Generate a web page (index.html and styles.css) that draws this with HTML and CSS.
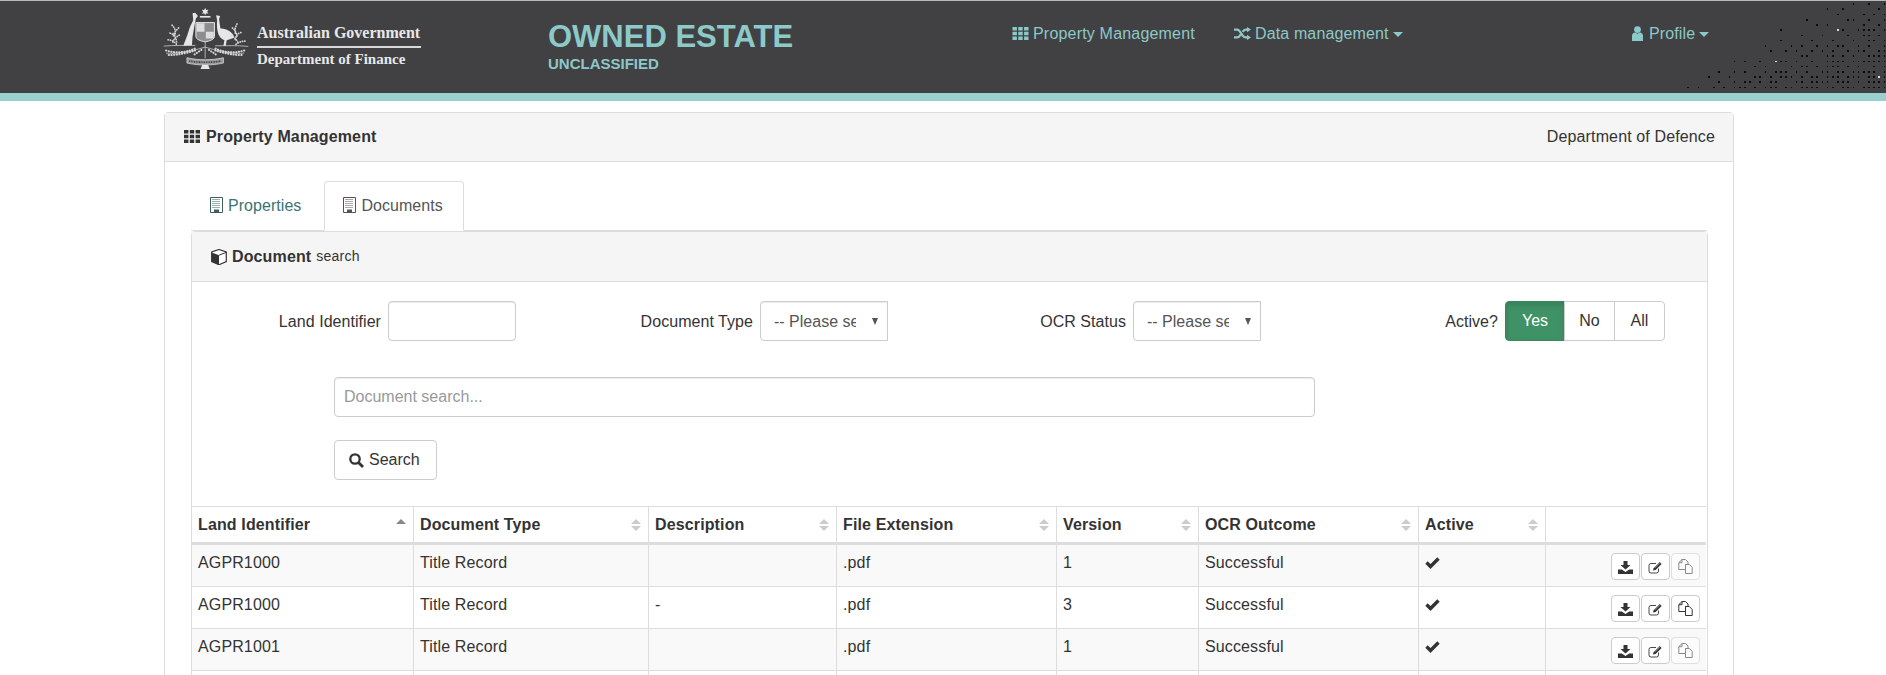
FILE: index.html
```
<!DOCTYPE html>
<html lang="en">
<head>
<meta charset="utf-8">
<title>Owned Estate</title>
<link rel="stylesheet" href="styles.css">
</head>
<body>
<svg class="defs" width="0" height="0" aria-hidden="true">
  <symbol id="i-grid" viewBox="0 0 16 13">
    <path d="M0 0h4.400v3.600H0zM5.800 0h4.400v3.600H5.800zM11.600 0H16v3.600h-4.400zM0 4.700h4.400v3.600H0zM5.800 4.700h4.400v3.600H5.800zM11.600 4.700H16v3.600h-4.400zM0 9.400h4.400V13H0zM5.800 9.400h4.400V13H5.800zM11.600 9.400H16V13h-4.400z"/>
  </symbol>
  <symbol id="i-building" viewBox="0 0 13 16">
    <path d="M.5.5h12v15H.5z" fill="#fff" stroke="currentColor"/>
    <path d="M2.500 2.500h8M2.500 4.500h8M2.500 6.500h8M2.500 8.500h8M2.500 10.500h8" stroke="currentColor" stroke-dasharray="1 1" fill="none"/>
    <path d="M4 12.500h5V16H4z" fill="currentColor"/>
  </symbol>
  <symbol id="i-cube" viewBox="0 0 16 16">
    <path d="M8 .5 15.300 3v9.600L8 15.700.7 12.600V3z" fill="#fff" stroke="currentColor" stroke-width="1.200"/>
    <path d="M.7 3.400 8 6.200v9.500L.7 12.600z"/>
    <path d="M8 6.200 15.300 3.400" stroke="currentColor" fill="none"/>
  </symbol>
  <symbol id="i-random" viewBox="0 0 17 13">
    <path d="M0 2.600h3.200c3.400 0 4.600 7.800 8.400 7.800h1.600M0 10.400h3.200c1.500 0 2.600-1.400 3.400-2.800M8.600 4.800c.8-1.200 1.700-2.200 3-2.200h1.600" fill="none" stroke="currentColor" stroke-width="2.200"/>
    <path d="M13 0l4 2.600-4 2.600zM13 7.800l4 2.600-4 2.600z"/>
  </symbol>
  <symbol id="i-user" viewBox="0 0 11 15">
    <circle cx="5.500" cy="3.600" r="3.400"/>
    <path d="M0 15V10c0-2 1.400-3.200 3-3.400l2.500 1.200L8 6.600c1.600.2 3 1.400 3 3.400v5z"/>
  </symbol>
  <symbol id="i-search" viewBox="0 0 15 15">
    <circle cx="6" cy="6" r="4.700" fill="none" stroke="currentColor" stroke-width="2.300"/>
    <path d="M9.500 9.500 14 14" stroke="currentColor" stroke-width="2.800" fill="none"/>
  </symbol>
  <symbol id="i-ok" viewBox="0 0 15 12">
    <path d="M1.500 5.500 5.500 9.500 13.500 1.500" fill="none" stroke="currentColor" stroke-width="3.400"/>
  </symbol>
  <symbol id="i-download" viewBox="0 0 15 13">
    <path d="M5.500 0h4v4h3L7.500 8.500 2.500 4h3z"/>
    <path d="M0 8.500h3.800L7.500 11l3.700-2.500H15V13H0z"/>
  </symbol>
  <symbol id="i-edit" viewBox="0 0 15 13">
    <path d="M10.500 7.500V10a2 2 0 0 1-2 2H3a2 2 0 0 1-2-2V4.500a2 2 0 0 1 2-2h5" fill="none" stroke="currentColor" stroke-width=".9"/>
    <path d="M5 9.500 5.600 7l6-6 2 2-6 6z"/>
    <path d="M6.700 6.900 11.700 1.900" stroke="#fff" stroke-width=".6" fill="none"/>
  </symbol>
  <symbol id="i-copy" viewBox="0 0 15 15">
    <path d="M4 .5h3.500L10 3v2.500H7.500v5H.8V3.700z" fill="none" stroke="currentColor"/>
    <path d="M4 .5v3.200H.8M7.500 5.500h3.800L14.200 8.400V14.500H7.500z" fill="none" stroke="currentColor"/>
  </symbol>
</svg>

<header class="topbar">
  <div class="brand">
    <svg class="crest" viewBox="20 5 265 190" aria-hidden="true">
      <g fill="#e6e6e6">
        <path d="M150 7l3 7 7-1-4 6 4 6-7-1-3 6-3-6-7 1 4-6-4-6 7 1z"/>
        <path d="M112 24l8-2 8 10-6 8-4 20-6 35-2 25-26 2 12-32 8-25 10-20z"/>
        <path d="M183 30l12 2-3 10 4 28c14-2 39 10 42 28l-23 7-3 17h-7l3-17c-16-5-25-25-22-60z"/>
        <path d="M134 32h32v5h-32z"/>
        <path d="M142 178h16l6 14h-28z"/>
      </g>
      <path d="M122 52h56v42c0 8-14 14-28 16-14-2-28-8-28-16z" fill="#8d8d8e" stroke="#e6e6e6" stroke-width="3"/>
      <path d="M124 54h24v26h-24zM152 80h24v20h-24z" fill="#dcdcdc"/>
      <path d="M150 110v50M150 126c-30 8-70 22-118 18M150 126c30 8 70 22 118 18M25 123c30-3 65-2 95-2M180 122c30 0 65-2 100 2" fill="none" stroke="#e6e6e6" stroke-width="2"/>
      <g fill="none" stroke="#d6d6d6" stroke-linecap="round">
        <path d="M50 60c10 8 12 20 8 32M70 68c-8 8-14 14-16 24M44 84c10 2 18 10 20 26M72 90c-8 4-16 10-20 22M38 104c10 0 20 6 26 14" stroke-width="5" stroke-dasharray="1 6"/>
        <path d="M246 56c-6 10-8 20-4 32M232 68c8 6 12 14 14 26M258 82c-10 2-16 10-18 24M228 92c8 2 16 10 22 22M270 108c-10 0-20 4-28 10" stroke-width="5" stroke-dasharray="1 6"/>
        <path d="M32 136c30 10 60 6 88-6M40 150c28 0 56-6 80-14M268 136c-30 10-60 6-88-6M260 150c-28 0-56-6-80-14M118 148l24-16M182 148l-24-16" stroke-width="6" stroke-dasharray="1 7"/>
      </g>
      <path d="M95 158c35 8 75 8 110 0v16c-35 8-75 8-110 0z" fill="#9a9a9b" stroke="#e6e6e6" stroke-width="2"/>
      <path d="M102 168c30 5 66 5 96 0" fill="none" stroke="#414042" stroke-width="5" stroke-dasharray="3 2"/>
    </svg>
    <div class="brand-text">
      <div class="gov">Australian Government</div>
      <div class="dept">Department of Finance</div>
    </div>
  </div>
  <div class="app-title">
    <div class="app-name">OWNED ESTATE</div>
    <div class="app-class">UNCLASSIFIED</div>
  </div>
  <nav class="topnav">
    <a class="topnav-item nav-prop"><svg class="ic ic-grid"><use href="#i-grid"/></svg>Property Management</a>
    <a class="topnav-item nav-data"><svg class="ic ic-random"><use href="#i-random"/></svg>Data management<span class="caret"></span></a>
    <a class="topnav-item nav-profile"><svg class="ic ic-user"><use href="#i-user"/></svg>Profile<span class="caret"></span></a>
  </nav>
  <svg class="dots" viewBox="0 0 618 279" aria-hidden="true">
    <path d="M24 259h0M55 259h0M101 259h0M132 259h0M163 259h0M179 259h0M194 259h0M225 259h0M256 259h0M272 259h0M287 259h0M318 259h0M334 259h0M365 259h0M380 259h0M396 259h0M411 259h0M442 259h0M458 259h0M489 259h0M504 259h0M520 259h0M551 259h0M566 259h0M582 259h0M597 259h0M613 259h0
    M117 243h0M163 243h0M194 243h0M209 243h0M240 243h0M272 243h0M287 243h0M349 243h0M365 243h0M396 243h0M411 243h0M427 243h0M442 243h0M473 243h0M489 243h0M504 243h0M535 243h0M566 243h0M582 243h0M597 243h0M613 243h0
    M86 228h0M148 228h0M225 228h0M240 228h0M272 228h0M303 228h0M318 228h0M334 228h0M365 228h0M396 228h0M411 228h0M442 228h0M458 228h0M473 228h0M504 228h0M520 228h0M535 228h0M566 228h0M582 228h0M613 228h0
    M117 212h0M163 212h0M194 212h0M256 212h0M287 212h0M303 212h0M318 212h0M349 212h0M380 212h0M427 212h0M442 212h0M473 212h0M489 212h0M520 212h0M535 212h0M551 212h0M566 212h0M582 212h0M613 212h0
    M225 196h0M256 196h0M334 196h0M365 196h0M380 196h0M411 196h0M442 196h0M458 196h0M473 196h0M504 196h0M535 196h0M582 196h0M613 196h0
    M163 181h0M194 181h0M240 181h0M303 181h0M318 181h0M349 181h0M396 181h0M442 181h0M458 181h0M473 181h0M489 181h0M520 181h0M535 181h0M551 181h0M566 181h0M582 181h0M597 181h0M613 181h0
    M365 165h0M380 165h0M442 165h0M458 165h0M489 165h0M520 165h0M566 165h0M582 165h0M597 165h0M613 165h0
    M272 150h0M318 150h0M349 150h0M396 150h0M427 150h0M458 150h0M504 150h0M535 150h0M551 150h0M597 150h0M613 150h0
    M256 134h0M334 134h0M365 134h0M411 134h0M442 134h0M473 134h0M489 134h0M535 134h0M566 134h0M613 134h0
    M303 118h0M396 118h0M458 118h0M520 118h0M566 118h0M582 118h0M613 118h0
    M365 103h0M427 103h0M504 103h0M551 103h0M566 103h0M597 103h0
    M303 87h0M489 87h0M535 87h0M551 87h0M566 87h0M582 87h0M613 87h0
    M411 72h0M442 72h0M551 72h0M597 72h0
    M380 56h0M504 56h0M520 56h0M566 56h0M613 56h0
    M473 40h0M551 40h0M582 40h0M613 40h0
    M442 24h0M489 24h0M597 24h0
    M520 9h0M566 9h0M613 9h0" class="dots-dark"/>
    <path d="M287 181h0M473 87h0M597 228h0" class="dots-light"/>
  </svg>
</header>

<main class="panel">
  <div class="panel-head">
    <div class="panel-title"><svg class="ic ic-grid"><use href="#i-grid"/></svg>Property Management</div>
    <div>Department of Defence</div>
  </div>
  <div class="panel-body">
    <ul class="tabs">
      <li class="tab"><a><svg class="ic ic-building"><use href="#i-building"/></svg>Properties</a></li>
      <li class="tab tab-active"><a><svg class="ic ic-building"><use href="#i-building"/></svg>Documents</a></li>
    </ul>
    <section class="inner">
      <div class="inner-head"><svg class="ic ic-cube"><use href="#i-cube"/></svg><strong>Document</strong> <small>search</small></div>
      <form class="search-form">
        <div class="filters">
          <label class="field field-land">Land Identifier <input class="control control-land" type="text"></label>
          <label class="field field-type">Document Type <span class="select-wrap"><select class="control"><option>-- Please select --</option></select></span></label>
          <label class="field field-ocr">OCR Status <span class="select-wrap"><select class="control"><option>-- Please select --</option></select></span></label>
          <div class="field field-active">Active?
            <div class="btn-group">
              <button type="button" class="seg seg-on">Yes</button><button type="button" class="seg">No</button><button type="button" class="seg">All</button>
            </div>
          </div>
        </div>
        <input class="control control-search" type="text" placeholder="Document search...">
        <button type="button" class="btn-search"><svg class="ic ic-search"><use href="#i-search"/></svg>Search</button>
      </form>
      <table class="grid">
        <colgroup>
          <col class="c1"><col class="c2"><col class="c3"><col class="c4"><col class="c5"><col class="c6"><col class="c7"><col class="c8">
        </colgroup>
        <thead>
          <tr>
            <th class="sort sort-asc">Land Identifier</th>
            <th class="sort">Document Type</th>
            <th class="sort">Description</th>
            <th class="sort">File Extension</th>
            <th class="sort">Version</th>
            <th class="sort">OCR Outcome</th>
            <th class="sort">Active</th>
            <th></th>
          </tr>
        </thead>
        <tbody>
          <tr>
            <td>AGPR1000</td><td>Title Record</td><td></td><td>.pdf</td><td>1</td><td>Successful</td>
            <td><svg class="ic ic-ok"><use href="#i-ok"/></svg></td>
            <td class="actions"><button type="button" class="act"><svg class="ic ic-act"><use href="#i-download"/></svg></button><button type="button" class="act"><svg class="ic ic-act"><use href="#i-edit"/></svg></button><button type="button" class="act act-off"><svg class="ic ic-copy"><use href="#i-copy"/></svg></button></td>
          </tr>
          <tr>
            <td>AGPR1000</td><td>Title Record</td><td>-</td><td>.pdf</td><td>3</td><td>Successful</td>
            <td><svg class="ic ic-ok"><use href="#i-ok"/></svg></td>
            <td class="actions"><button type="button" class="act"><svg class="ic ic-act"><use href="#i-download"/></svg></button><button type="button" class="act"><svg class="ic ic-act"><use href="#i-edit"/></svg></button><button type="button" class="act"><svg class="ic ic-copy"><use href="#i-copy"/></svg></button></td>
          </tr>
          <tr>
            <td>AGPR1001</td><td>Title Record</td><td></td><td>.pdf</td><td>1</td><td>Successful</td>
            <td><svg class="ic ic-ok"><use href="#i-ok"/></svg></td>
            <td class="actions"><button type="button" class="act"><svg class="ic ic-act"><use href="#i-download"/></svg></button><button type="button" class="act"><svg class="ic ic-act"><use href="#i-edit"/></svg></button><button type="button" class="act act-off"><svg class="ic ic-copy"><use href="#i-copy"/></svg></button></td>
          </tr>
          <tr>
            <td></td><td></td><td></td><td></td><td></td><td></td><td></td><td></td>
          </tr>
        </tbody>
      </table>
    </section>
  </div>
</main>
</body>
</html>
```
FILE: styles.css
```
* { box-sizing: border-box; }
html, body { margin: 0; height: 675px; overflow: hidden; }
body {
  background: #fff;
  color: #333;
  font: 16px/23px "Liberation Sans", Arial, sans-serif;
  letter-spacing: .13px;
}
.defs { position: absolute; }
.ic { display: inline-block; fill: currentColor; flex: none; }

/* Top bar */
.topbar {
  position: relative;
  display: flex;
  height: 101px;
  padding-left: 162px;
  background: #414042;
  border-top: 1px solid #b8b8b8;
  border-bottom: 8px solid #9bd0d0;
  color: #8cc9c9;
}
.brand { display: flex; width: 386px; padding-top: 6px; }
.crest { width: 88px; height: 63px; }
.brand-text { margin-left: 7px; padding-top: 15px; width: 164px; color: #e8e8e8; font-family: "Liberation Serif", "Times New Roman", serif; font-weight: 700; letter-spacing: 0; }
.gov { font-size: 16px; line-height: 22px; padding-bottom: 2px; border-bottom: 2px solid #d8d8d8; white-space: nowrap; }
.dept { font-size: 15px; line-height: 18px; margin-top: 2px; white-space: nowrap; }
.app-title { width: 464px; padding-top: 18px; font-weight: 700; letter-spacing: 0; }
.app-name { font-size: 31px; line-height: 36px; }
.app-class { font-size: 15px; line-height: 16px; margin-top: 1px; }
.topnav { display: flex; flex: 1; padding-top: 21px; line-height: 23px; }
.topnav-item { display: flex; align-items: center; height: 23px; white-space: nowrap; }
.nav-prop { width: 222px; letter-spacing: .19px; }
.nav-data { width: 398px; }
.topnav .ic-grid { width: 17px; height: 13px; margin-right: 4px; }
.ic-random { width: 17px; height: 13px; margin-right: 4px; }
.ic-user { width: 11px; height: 15px; margin-right: 6px; }
.caret {
  width: 0; height: 0; margin-left: 4px; margin-top: 2px;
  border-left: 5px solid transparent;
  border-right: 5px solid transparent;
  border-top: 5px solid currentColor;
}
.dots { position: absolute; right: 0; top: 0; width: 206px; height: 93px; fill: none; stroke-linecap: square; stroke-width: 5; shape-rendering: crispEdges; }
.dots-dark { stroke: #0c0c0c; }
.dots-light { stroke: #bfe6e6; }

/* Outer panel */
.panel {
  margin: 11px 152px 0 164px;
  border: 1px solid #ddd;
  border-radius: 4px 4px 0 0;
  height: 700px;
}
.panel-head {
  display: flex;
  justify-content: space-between;
  align-items: center;
  height: 49px;
  padding: 0 18px 2px 19px;
  background: #f5f5f5;
  border-bottom: 1px solid #ddd;
}
.panel-title { display: flex; align-items: center; font-weight: 700; }
.panel-title .ic-grid { width: 16px; height: 13px; margin-right: 6px; }
.panel-body { padding: 19px 26px 0; }

/* Tabs */
.tabs {
  display: flex;
  height: 50px;
  margin: 0;
  padding: 0;
  list-style: none;
  border-bottom: 1px solid #ddd;
  letter-spacing: .05px;
}
.tab { margin-right: 2px; }
.tab a {
  display: flex;
  align-items: center;
  height: 50px;
  padding: 0 20px 2px 18px;
  color: #3a7572;
  border: 1px solid transparent;
  border-radius: 4px 4px 0 0;
}
.tab .ic-building { width: 13px; height: 16px; margin-right: 5px; color: #3f5f5c; }
.tab-active a {
  color: #555;
  background: #fff;
  border-color: #ddd #ddd #fff;
}
.tab-active .ic-building { color: #5a5050; }

/* Inner panel */
.inner { width: 1517px; height: 600px; border: 1px solid #ddd; border-radius: 4px 4px 0 0; }
.inner-head {
  display: flex;
  align-items: center;
  height: 50px;
  padding-left: 19px;
  background: #f5f5f5;
  border-bottom: 1px solid #ddd;
  white-space: pre;
}
.ic-cube { width: 16px; height: 16px; margin-right: 5px; }
.inner-head small { font-size: 14px; margin-left: 5px; letter-spacing: .25px; }
.search-form { padding: 19px 0 0; }
.filters { display: flex; height: 40px; letter-spacing: .05px; }
.field { display: flex; justify-content: flex-end; align-items: center; gap: 7px; white-space: nowrap; padding-bottom: 0; line-height: 21px; }
.field-land { width: 324px; }
.field-type { width: 372px; }
.field-ocr { width: 373px; }
.field-active { width: 404px; }
.control {
  display: block;
  height: 40px;
  border: 1px solid #ccc;
  border-radius: 4px;
  background: #fff;
  color: #555;
  font: 16px "Liberation Sans", Arial, sans-serif;
  box-shadow: inset 0 1px 1px rgba(0,0,0,.075);
}
.control-land { width: 128px; padding: 0 12px; }
.select-wrap { position: relative; display: block; }
.select-wrap select {
  width: 128px;
  padding: 0 31px 0 13px;
  appearance: none;
  -webkit-appearance: none;
  border-radius: 4px 0 0 4px;
}
.select-wrap::after {
  content: "";
  position: absolute;
  right: 10px;
  top: 17px;
  border-left: 3.500px solid transparent;
  border-right: 3.500px solid transparent;
  border-top: 7px solid #555;
}
.btn-group { display: flex; }
.seg {
  height: 40px;
  padding: 0;
  width: 51px;
  margin-left: -1px;
  border: 1px solid #ccc;
  background: #fff;
  color: #333;
  font: 16px "Liberation Sans", Arial, sans-serif;
}
.seg:first-child { width: 60px; margin-left: 0; border-radius: 4px 0 0 4px; }
.seg:last-child { border-radius: 0 4px 4px 0; }
.seg-on { background: #3f9265; border-color: #3a875d; color: #fff; box-shadow: inset 0 3px 5px rgba(0,0,0,.125); }
.control-search { width: 981px; margin: 36px 0 0 142px; padding: 0 9px; }
.control-search::placeholder { color: #999; opacity: 1; }
.btn-search {
  display: flex;
  align-items: center;
  height: 40px;
  width: 103px;
  margin: 23px 0 26px 142px;
  padding: 0 0 0 14px;
  border: 1px solid #ccc;
  border-radius: 4px;
  background: #fff;
  color: #333;
  font: 16px "Liberation Sans", Arial, sans-serif;
}
.ic-search { width: 15px; height: 15px; margin-right: 5px; }

/* Table */
.grid { width: 1514px; table-layout: fixed; border-collapse: separate; border-spacing: 0; }
.c1 { width: 221px; } .c2 { width: 235px; } .c3 { width: 188px; } .c4 { width: 220px; }
.c5 { width: 142px; } .c6 { width: 220px; } .c7 { width: 127px; } .c8 { width: 161px; }
.grid th {
  position: relative;
  height: 39px;
  padding: 0 6px;
  text-align: left;
  border-top: 1px solid #ddd;
  border-bottom: 3px solid #ddd;
}
.grid th + th, .grid td + td { border-left: 1px solid #ddd; padding-left: 6px; }
.grid td {
  height: 42px;
  padding: 6px;
  vertical-align: top;
  border-bottom: 1px solid #ddd;
}
.grid tbody tr:nth-child(odd) td { background: #f9f9f9; }
.sort::before, .sort::after {
  content: "";
  position: absolute;
  right: 7px;
  border-left: 5px solid transparent;
  border-right: 5px solid transparent;
}
.sort::before { top: 12px; border-bottom: 5px solid #ccc; }
.sort::after { top: 19px; border-top: 5px solid #ccc; }
.sort-asc::before { border-bottom-color: #888; }
.sort-asc::after { display: none; }
.ic-ok { width: 15px; height: 12px; color: #333; margin-top: 6px; display: block; }
.actions { text-align: right; white-space: nowrap; font-size: 0; padding-top: 8px !important; }
.act {
  width: 29px;
  height: 27px;
  margin-left: 1px;
  padding: 0;
  border: 1px solid #ccc;
  border-radius: 4px;
  background: #fff;
  color: #333;
  vertical-align: top;
}
.act-off { opacity: .55; }
.ic-act { width: 15px; height: 13px; vertical-align: middle; }
.ic-copy { width: 15px; height: 15px; vertical-align: middle; }
```
